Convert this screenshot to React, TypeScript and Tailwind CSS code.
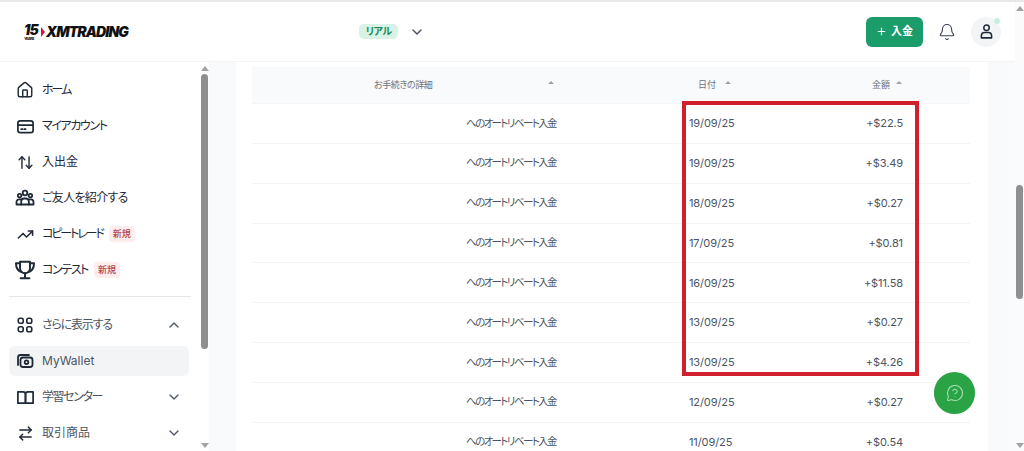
import React from 'react';
import { House, ArrowUpDown, TrendingUp, ChevronUp, ChevronDown, ArrowRightLeft, Bell, Plus, MessageCircleQuestion } from 'lucide-react';

const font = "font-['Inter','Noto_Sans_CJK_JP',sans-serif] [font-feature-settings:'palt']";

const rows = [
  ['19/09/25', '+$22.5'],
  ['19/09/25', '+$3.49'],
  ['18/09/25', '+$0.27'],
  ['17/09/25', '+$0.81'],
  ['16/09/25', '+$11.58'],
  ['13/09/25', '+$0.27'],
  ['13/09/25', '+$4.26'],
  ['12/09/25', '+$0.27'],
  ['11/09/25', '+$0.54'],
];

const Icon = ({ size = 20, children }: { size?: number; children: React.ReactNode }) => (
  <svg width={size} height={size} viewBox="0 0 20 20" fill="none" stroke="#1f2937" strokeWidth="1.8" strokeLinecap="round" strokeLinejoin="round" className="shrink-0">
    {children}
  </svg>
);

const CardIcon = () => (
  <Icon size={19}>
    <rect x="2" y="4" width="16" height="12.5" rx="2.5" />
    <path d="M2 8.5 H18" />
    <path d="M5.5 12.8 H6.8 M8.8 12.8 H10.1" />
  </Icon>
);

const PeopleIcon = () => (
  <Icon size={20}>
    <circle cx="10" cy="5" r="2.3" />
    <circle cx="4.6" cy="7.6" r="1.8" />
    <circle cx="15.4" cy="7.6" r="1.8" />
    <path d="M6.2 16.5 V13.5 a3 3 0 0 1 3-3 h1.6 a3 3 0 0 1 3 3 V16.5 Z" />
    <path d="M6.2 16.5 H1.5 V14 a2.6 2.6 0 0 1 2.6-2.6 H6.6 M13.8 16.5 H18.5 V14 a2.6 2.6 0 0 0-2.6-2.6 H13.4" />
  </Icon>
);

const TrophyIcon = () => (
  <Icon size={22}>
    <path d="M5.5 2.5 H14.5 V8.5 a4.5 4.5 0 0 1-9 0 Z" />
    <path d="M5.5 3.8 H1.8 C1.8 8 3.4 10.8 7 11.8 M14.5 3.8 H18.2 C18.2 8 16.6 10.8 13 11.8" />
    <path d="M10 13 V17.4 M6 17.6 H14" />
  </Icon>
);

const BookIcon = () => (
  <Icon size={19}>
    <path d="M2 4 H7.5 a2.5 2.5 0 0 1 2.5 2.5 V16 H2 Z" />
    <path d="M18 4 H12.5 a2.5 2.5 0 0 0-2.5 2.5 V16 H18 Z" />
  </Icon>
);

const WalletIcon = () => (
  <Icon size={20}>
    <path d="M3 14 V6.5 C3 5 4 4 5.5 4 H14" />
    <rect x="5.5" y="6.5" width="12" height="9.5" rx="2.5" />
    <circle cx="11.5" cy="11.2" r="1.8" />
  </Icon>
);

const GridIcon = () => (
  <Icon size={18}>
    <rect x="2.5" y="2.5" width="5.5" height="5.5" rx="2" />
    <rect x="12" y="2.5" width="5.5" height="5.5" rx="2" />
    <rect x="2.5" y="12" width="5.5" height="5.5" rx="2" />
    <rect x="12" y="12" width="5.5" height="5.5" rx="2" />
  </Icon>
);

const UserIcon = () => (
  <Icon size={17}>
    <circle cx="10" cy="5.6" r="3.2" />
    <path d="M4 17.5 V15 a3.8 3.8 0 0 1 3.8-3.8 h4.4 a3.8 3.8 0 0 1 3.8 3.8 v2.5 Z" />
  </Icon>
);

const New = () => (
  <span className="ml-[6px] bg-[#fdecec] text-[#b4474f] text-[9px] font-medium rounded-[4px] w-[26px] h-[16px] flex items-center justify-center">新規</span>
);

const NavItem = ({ icon, label, badge, chevron, active, light, tracking = '' }: { icon: React.ReactNode; label: string; badge?: boolean; chevron?: 'up' | 'down'; active?: boolean; light?: boolean; tracking?: string }) => (
  <div className={`h-[30px] mb-[6px] ml-[9px] w-[180px] flex items-center rounded-[6px] pl-[7px] pr-[7px] ${active ? 'bg-[#f3f4f6]' : ''}`}>
    <span className="w-[18px] flex justify-center shrink-0">{icon}</span>
    <span className={`ml-[8px] text-[12px] whitespace-nowrap ${tracking} ${light ? 'text-[#4b5563]' : 'text-[#1f2937]'}`}>{label}</span>
    {badge && <New />}
    {chevron === 'up' && <ChevronUp size={16} className="ml-auto text-[#4b5563]" />}
    {chevron === 'down' && <ChevronDown size={16} className="ml-auto text-[#4b5563]" />}
  </div>
);

const SortCaret = ({ tight }: { tight?: boolean }) => (
  <span className={`${tight ? 'ml-[6px]' : 'ml-[9px]'} mb-[6px] w-0 h-0 border-x-[3px] border-x-transparent border-b-[3px] border-b-[#9ca3af]`} />
);

export default function App() {
  return (
    <div className={`h-[451px] w-[1024px] overflow-hidden flex flex-col bg-white ${font}`}>
      <div className="h-[2px] bg-[#e8e8e8] shrink-0" />
      <div className="flex flex-1 min-h-0">
        <div className="w-[1015px] flex flex-col">
          <header className="h-[60px] shrink-0 flex items-center border-b border-[#f3f4f6] pl-[24px] pr-[14px]">
            <div className="flex items-center w-[335px]">
              <span className="relative text-[14px] font-black italic tracking-[-0.8px] text-[#111] leading-none pb-[3px]">
                15
                <span className="absolute left-0 bottom-[-1px] text-[4px] not-italic font-bold leading-none">YEARS</span>
              </span>
              <span className="w-0 h-0 ml-[3px] mr-[1px] border-y-[5px] border-y-transparent border-l-[4px] border-l-[#d8163c]" />
              <span className="text-[14px] font-black italic tracking-[-0.9px] text-[#111]">XMTRADING</span>
            </div>
            <span className="bg-[#d8f3e6] text-[#1b8a5a] text-[10px] font-semibold tracking-[-0.5px] rounded-[5px] w-[39px] h-[15px] flex items-center justify-center">リアル</span>
            <ChevronDown size={16} strokeWidth={2.2} className="ml-[11px] text-[#4b5563]" />
            <button className="ml-auto w-[57px] h-[30px] rounded-[6px] bg-[#1a9d6b] text-white text-[11px] font-semibold flex items-center justify-center gap-[4px]">
              <Plus size={11} strokeWidth={2.5} />入金
            </button>
            <Bell size={18} strokeWidth={1.5} className="ml-[15px] text-[#374151]" />
            <div className="ml-[15px] relative w-[30px] h-[30px] rounded-full bg-[#f3f4f6] flex items-center justify-center">
              <UserIcon />
              <span className="absolute right-[1px] top-[1px] w-[6px] h-[6px] rounded-full bg-[#c5eedd]" />
            </div>
          </header>
          <div className="flex flex-1 min-h-0">
            <aside className="w-[209px] shrink-0 flex">
              <nav className="w-[200px] pt-[13px] overflow-hidden">
                <NavItem icon={<House size={18} strokeWidth={1.9} className="text-[#1f2937]" />} label="ホーム" tracking="tracking-[-2px]" />
                <NavItem icon={<CardIcon />} label="マイアカウント" tracking="tracking-[-1.4px]" />
                <NavItem icon={<ArrowUpDown size={17} strokeWidth={2} className="text-[#1f2937]" />} label="入出金" />
                <NavItem icon={<PeopleIcon />} label="ご友人を紹介する" tracking="tracking-[-0.7px]" />
                <NavItem icon={<TrendingUp size={17} strokeWidth={2.2} className="text-[#1f2937]" />} label="コピートレード" badge tracking="tracking-[-2.1px]" />
                <NavItem icon={<TrophyIcon />} label="コンテスト" badge tracking="tracking-[-1.4px]" />
                <div className="h-px bg-[#e5e7eb] mx-[9px] mt-[11px] mb-[13px]" />
                <NavItem icon={<GridIcon />} label="さらに表示する" chevron="up" light tracking="tracking-[-1.2px]" />
                <NavItem icon={<WalletIcon />} label="MyWallet" active light />
                <NavItem icon={<BookIcon />} label="学習センター" chevron="down" light tracking="tracking-[-1.4px]" />
                <NavItem icon={<ArrowRightLeft size={17} strokeWidth={2} className="text-[#1f2937]" />} label="取引商品" chevron="down" light />
              </nav>
              <div className="w-[9px] shrink-0 flex flex-col items-center bg-white">
                <span className="mt-[4px] w-0 h-0 border-x-[4px] border-x-transparent border-b-[5px] border-b-[#a3a3a3]" />
                <div className="mt-[3px] w-[7px] h-[275px] rounded-full bg-[#8f8f8f]" />
                <span className="mt-auto mb-[3px] w-0 h-0 border-x-[4px] border-x-transparent border-t-[5px] border-t-[#a3a3a3]" />
              </div>
            </aside>
            <main className="flex-1 min-w-0 bg-[#f9fafb] pl-[27px] pr-[27px] relative overflow-hidden">
              <div className="bg-white h-full pl-[16px] pr-[18px] pt-[5px]">
                <div className="h-[37px] bg-[#f9fafb] flex items-center text-[9px] text-[#6b7280] border-b border-[#f3f4f6]">
                  <span className="ml-[122px] w-[180px] flex items-center justify-between whitespace-nowrap"><span className="tracking-[-0.4px]">お手続きの詳細</span><SortCaret /></span>
                  <span className="ml-[144px] flex items-center">日付<SortCaret /></span>
                  <span className="ml-[141px] flex items-center">金額<SortCaret tight /></span>
                </div>
                {rows.map(([date, amount]) => (
                  <div key={date + amount} className="h-[39.85px] flex items-center text-[11px] text-[#4b5563] border-b border-[#f3f4f6]">
                    <span className="ml-[214px] w-[223px] whitespace-nowrap text-[10.5px] tracking-[-1.6px]">へのオートリベート入金</span>
                    <span className="w-[110px] tracking-[-0.1px]">{date}</span>
                    <span className="w-[104px] text-right tracking-[-0.1px]">{amount}</span>
                  </div>
                ))}
              </div>
              <div className="absolute left-[473px] top-[39px] w-[237px] h-[275px] border-[4px] border-[#d0202e]" />
              <div className="absolute left-[725px] top-[310px] w-[41px] h-[42px] rounded-full bg-[#2aa345] flex items-center justify-center">
                <MessageCircleQuestion size={18} strokeWidth={1.4} className="text-[#a7dfb4]" />
              </div>
            </main>
          </div>
        </div>
        <div className="w-[9px] shrink-0 flex flex-col items-center bg-[#fbfbfb]">
          <span className="mt-[4px] w-0 h-0 border-x-[4px] border-x-transparent border-b-[5px] border-b-[#a3a3a3]" />
          <div className="mt-[174px] w-[7px] h-[114px] rounded-full bg-[#8f8f8f]" />
          <span className="mt-auto mb-[3px] w-0 h-0 border-x-[4px] border-x-transparent border-t-[5px] border-t-[#a3a3a3]" />
        </div>
      </div>
    </div>
  );
}
